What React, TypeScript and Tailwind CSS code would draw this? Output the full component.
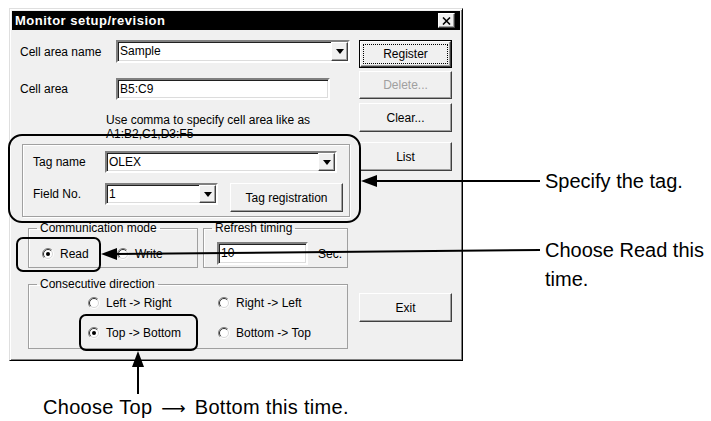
import React from "react";

const sunken =
  "bg-white border-2 border-t-[#808080] border-l-[#808080] border-b-white border-r-white shadow-[inset_1px_1px_0_#202020,inset_-1px_-1px_0_#dcdcdc]";
const raised =
  "bg-[#f0f0f0] border border-t-white border-l-white border-b-[#404040] border-r-[#404040] shadow-[inset_-1px_-1px_0_#a0a0a0]";

function Combo({ value, className }: { value: string; className: string }) {
  return (
    <div className={`flex items-stretch ${sunken} ${className}`}>
      <span className="flex-1 pl-[2px] leading-[18px]">{value}</span>
      <span className={`w-[17px] flex items-center justify-center ${raised}`}>
        <svg width="8" height="5" viewBox="0 0 8 5">
          <path d="M0 0h8L4 5z" fill="black" />
        </svg>
      </span>
    </div>
  );
}

function Btn({
  children,
  className = "",
  disabled,
  focused,
}: {
  children: React.ReactNode;
  className?: string;
  disabled?: boolean;
  focused?: boolean;
}) {
  if (focused) {
    return (
      <div className={`border border-black ${className}`}>
        <div className={`h-full flex items-center justify-center p-[2px] ${raised}`}>
          <div className="h-full w-full flex items-center justify-center border border-dotted border-black">
            {children}
          </div>
        </div>
      </div>
    );
  }
  return (
    <div
      className={`flex items-center justify-center ${raised} ${disabled ? "text-[#a0a0a0]" : ""} ${className}`}
    >
      {children}
    </div>
  );
}

function Radio({ checked, label, className = "" }: { checked?: boolean; label: string; className?: string }) {
  return (
    <div className={`flex items-center gap-[6px] ${className}`}>
      <svg width="12" height="12" viewBox="0 0 12 12" className="shrink-0">
        <circle cx="6" cy="6" r="5" fill="white" />
        <path d="M9.9 2.1A5.5 5.5 0 0 0 2.1 9.9" fill="none" stroke="#808080" strokeWidth="1" />
        <path d="M9.2 2.8A4.5 4.5 0 0 0 2.8 9.2" fill="none" stroke="#303030" strokeWidth="1" />
        <path d="M9.9 2.1A5.5 5.5 0 0 1 2.1 9.9" fill="none" stroke="#ffffff" strokeWidth="1" />
        <path d="M9.2 2.8A4.5 4.5 0 0 1 2.8 9.2" fill="none" stroke="#d8d8d8" strokeWidth="1" />
        {checked && <circle cx="6" cy="6" r="2" fill="black" />}
      </svg>
      <span>{label}</span>
    </div>
  );
}

function Dialog() {
  return (
    <div className="ml-[9px] mt-[8px] w-[454px] h-[353px] bg-[#f0f0f0] border border-t-[#dfdfdf] border-l-[#dfdfdf] border-b-black border-r-black shadow-[inset_1px_1px_0_white,inset_-1px_-1px_0_#808080] p-[2px] text-[12px] text-black">
      {/* title bar */}
      <div className="h-[19px] bg-black flex items-center justify-between">
        <span className="pl-[3px] text-white font-bold text-[13px] leading-none tracking-[0.5px]">
          Monitor setup/revision
        </span>
        <span className={`mr-[5px] w-[17px] h-[15px] flex items-center justify-center ${raised}`}>
          <svg width="9" height="8" viewBox="0 0 9 8">
            <path d="M1 0.5l7 7M8 0.5l-7 7" stroke="black" strokeWidth="1.6" />
          </svg>
        </span>
      </div>

      <div className="flex">
        {/* left column */}
        <div className="w-[338px]">
          <div className="mt-[10px] flex items-center h-[23px]">
            <span className="pl-[8px] w-[104px]">Cell area name</span>
            <Combo value="Sample" className="w-[234px] h-[23px]" />
          </div>
          <div className="mt-[15px] flex items-center h-[22px]">
            <span className="pl-[8px] w-[104px]">Cell area</span>
            <div className={`w-[214px] h-[22px] pl-[2px] leading-[18px] ${sunken}`}>B5:C9</div>
          </div>
          <div className="mt-[13px] pl-[94px] leading-[14px]">
            <div>Use comma to specify cell area like as</div>
            <div>A1:B2,C1,D3:F5</div>
          </div>

          {/* tag group */}
          <div className="mt-[3px] ml-[10px] w-[328px] h-[73px] border border-[#a0a0a0] shadow-[inset_1px_1px_0_white,1px_1px_0_white] pt-[6px] pl-[10px]">
            <div className="flex items-center h-[22px]">
              <span className="w-[72px]">Tag name</span>
              <Combo value="OLEX" className="w-[232px] h-[22px]" />
            </div>
            <div className="mt-[10px] flex items-start">
              <span className="w-[72px] leading-[22px]">Field No.</span>
              <Combo value="1" className="w-[113px] h-[22px]" />
              <Btn className="ml-[12px] w-[113px] h-[29px]">Tag registration</Btn>
            </div>
          </div>

          {/* mode + refresh */}
          <div className="mt-[4px] ml-[16px] flex">
            <fieldset className="w-[170px] h-[47px] border border-[#a0a0a0] shadow-[inset_1px_1px_0_white]">
              <legend className="ml-[8px] px-[3px] leading-[14px]">Communication mode</legend>
              <div className="mt-[9px] h-[20px] flex items-center pl-[13px]">
                <Radio checked label="Read" className="w-[75px]" />
                <Radio label="Write" />
              </div>
            </fieldset>
            <fieldset className="ml-[5px] w-[145px] h-[47px] border border-[#a0a0a0] shadow-[inset_1px_1px_0_white]">
              <legend className="ml-[8px] px-[3px] leading-[14px]">Refresh timing</legend>
              <div className="mt-[7px] flex items-center pl-[13px]">
                <div className={`w-[91px] h-[23px] pl-[2px] leading-[19px] ${sunken}`}>10</div>
                <span className="ml-[10px]">Sec.</span>
              </div>
            </fieldset>
          </div>

          {/* direction */}
          <fieldset className="mt-[9px] ml-[16px] w-[320px] h-[72px] border border-[#a0a0a0] shadow-[inset_1px_1px_0_white]">
            <legend className="ml-[8px] px-[3px] leading-[14px]">Consecutive direction</legend>
            <div className="mt-[2px] pl-[59px] grid grid-cols-[130px_1fr] gap-y-[10px]">
              <Radio label="Left -> Right" className="h-[20px]" />
              <Radio label="Right -> Left" className="h-[20px]" />
              <Radio checked label="Top -> Bottom" className="h-[20px]" />
              <Radio label="Bottom -> Top" className="h-[20px]" />
            </div>
          </fieldset>
        </div>

        {/* right column */}
        <div className="ml-[9px] w-[93px] flex flex-col">
          <Btn focused className="mt-[10px] h-[28px]">Register</Btn>
          <Btn disabled className="mt-[3px] h-[28px]">Delete...</Btn>
          <Btn className="mt-[4px] h-[29px]">Clear...</Btn>
          <Btn className="mt-[10px] h-[29px]">List</Btn>
          <Btn className="mt-[122px] h-[29px]">Exit</Btn>
        </div>
      </div>
    </div>
  );
}

export default function App() {
  return (
    <div className="relative w-[711px] h-[421px] bg-white overflow-hidden font-['Liberation_Sans',Arial,sans-serif]">
      <Dialog />

      {/* callouts */}
      <svg className="absolute inset-0 pointer-events-none" width="711" height="421" viewBox="0 0 711 421">
        <rect x="9" y="135" width="351" height="87" rx="13" fill="none" stroke="black" strokeWidth="2" />
        <path d="M361 181l16-6v12z" fill="black" />
        <line x1="375" y1="181" x2="540" y2="181" stroke="black" strokeWidth="2" />

        <rect x="17" y="238" width="83" height="33" rx="6" fill="none" stroke="black" strokeWidth="2" />
        <path d="M101 254l16-6v12z" fill="black" />
        <line x1="115" y1="254" x2="540" y2="250" stroke="black" strokeWidth="2" />

        <rect x="80" y="315" width="117" height="35" rx="6" fill="none" stroke="black" strokeWidth="2" />
        <path d="M138 351l-6 16h12z" fill="black" />
        <line x1="138" y1="365" x2="138" y2="394" stroke="black" strokeWidth="2" />
      </svg>

      <div className="absolute left-[545px] top-[169px] text-[20px] leading-[24px] text-black">Specify the tag.</div>
      <div className="absolute left-[545px] top-[236px] text-[20px] leading-[29px] text-black">
        Choose Read this
        <br />
        time.
      </div>
      <div className="absolute left-[43px] top-[395px] text-[20px] leading-[24px] text-black tracking-[0.3px]">
        Choose Top <span className="mx-[3px] font-['DejaVu_Sans',sans-serif] text-[17px]">⟶</span> Bottom this time.
      </div>
    </div>
  );
}
